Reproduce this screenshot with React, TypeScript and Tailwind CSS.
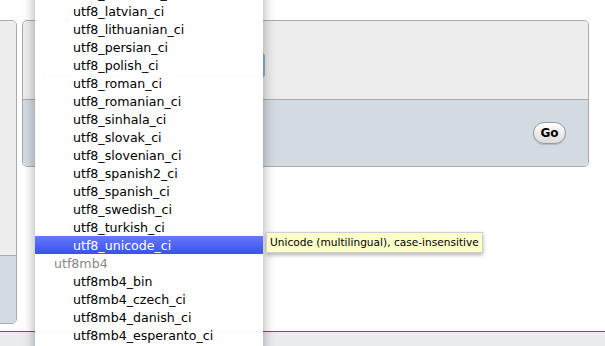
import React from "react";

const rows: { label: string; group?: boolean; selected?: boolean }[] = [
  { label: "utf8_icelandic_ci" },
  { label: "utf8_latvian_ci" },
  { label: "utf8_lithuanian_ci" },
  { label: "utf8_persian_ci" },
  { label: "utf8_polish_ci" },
  { label: "utf8_roman_ci" },
  { label: "utf8_romanian_ci" },
  { label: "utf8_sinhala_ci" },
  { label: "utf8_slovak_ci" },
  { label: "utf8_slovenian_ci" },
  { label: "utf8_spanish2_ci" },
  { label: "utf8_spanish_ci" },
  { label: "utf8_swedish_ci" },
  { label: "utf8_turkish_ci" },
  { label: "utf8_unicode_ci", selected: true },
  { label: "utf8mb4", group: true },
  { label: "utf8mb4_bin" },
  { label: "utf8mb4_czech_ci" },
  { label: "utf8mb4_danish_ci" },
  { label: "utf8mb4_esperanto_ci" },
  { label: "utf8mb4_estonian_ci" },
];

export default function App() {
  return (
    <div className="relative w-[605px] h-[346px] overflow-hidden bg-white font-['DejaVu_Sans',sans-serif] text-black">
      {/* fieldsets */}
      <div className="flex gap-[5px] pt-[20px]">
        {/* left fieldset, mostly off screen */}
        <div className="-ml-[23px] w-[40px] h-[304px] flex flex-col border border-[#aaa] rounded-[5px] overflow-hidden shrink-0">
          <div className="h-[235px] bg-[#ededed] border-b border-[#aaa]" />
          <div className="flex-1 bg-[#d3dbe2]" />
        </div>

        {/* main fieldset */}
        <div className="relative w-[567px] h-[147px] flex flex-col border border-[#aaa] rounded-[5px] shrink-0">
          {/* legend, hidden behind the open list */}
          <div className="absolute left-[20px] -top-[13px] w-[160px] h-[26px] bg-white border border-[#ccc] rounded-[4px] flex items-center pl-[20px]">
            <span className="w-[6px] h-[6px] bg-[#999]" />
          </div>
          <div className="h-[79px] bg-[#ededed] border-b border-[#aaa] rounded-t-[5px] pl-[20px] pt-[32px]">
            <div className="w-[222px] h-[25px] bg-white border-2 border-[#8fb2dc] rounded-[4px]" />
          </div>
          <div className="flex-1 bg-[#d3dbe2] rounded-b-[5px] flex items-center justify-end pr-[22px]">
            <button className="w-[33px] h-[22px] rounded-full border border-[#999] bg-gradient-to-b from-white to-[#dcdcdc] text-[12px] font-bold leading-none font-['DejaVu_Sans',sans-serif] shadow-[0_1px_1px_rgba(0,0,0,0.15)]">
              Go
            </button>
          </div>
        </div>
      </div>

      {/* bottom bar */}
      <div className="mt-[7px] h-[20px] border-t border-[#41697a] bg-[#e9edf0]" />

      {/* open select dropdown */}
      <div className="absolute left-[35px] -top-[16px] w-[228px] bg-white/[0.97] shadow-[0_0_12px_rgba(0,0,0,0.35)] text-[12.6px]">
        {rows.map((r) => (
          <div
            key={r.label}
            className={
              r.group
                ? "h-[18px] leading-[19px] pl-[19px] text-[#888]"
                : r.selected
                ? "h-[18px] leading-[19px] pl-[38px] text-white bg-gradient-to-b from-[#6679f8] to-[#3a50f0]"
                : "h-[18px] leading-[19px] pl-[38px]"
            }
          >
            {r.label}
          </div>
        ))}
      </div>

      {/* tooltip */}
      <div className="absolute left-[266px] top-[232px] h-[21px] px-[3px] bg-[#ffffc9] border border-[#cfcfcf] shadow-[0_2px_4px_rgba(0,0,0,0.3)] text-[10.6px] leading-[19px] whitespace-nowrap">
        Unicode (multilingual), case-insensitive
      </div>
    </div>
  );
}
